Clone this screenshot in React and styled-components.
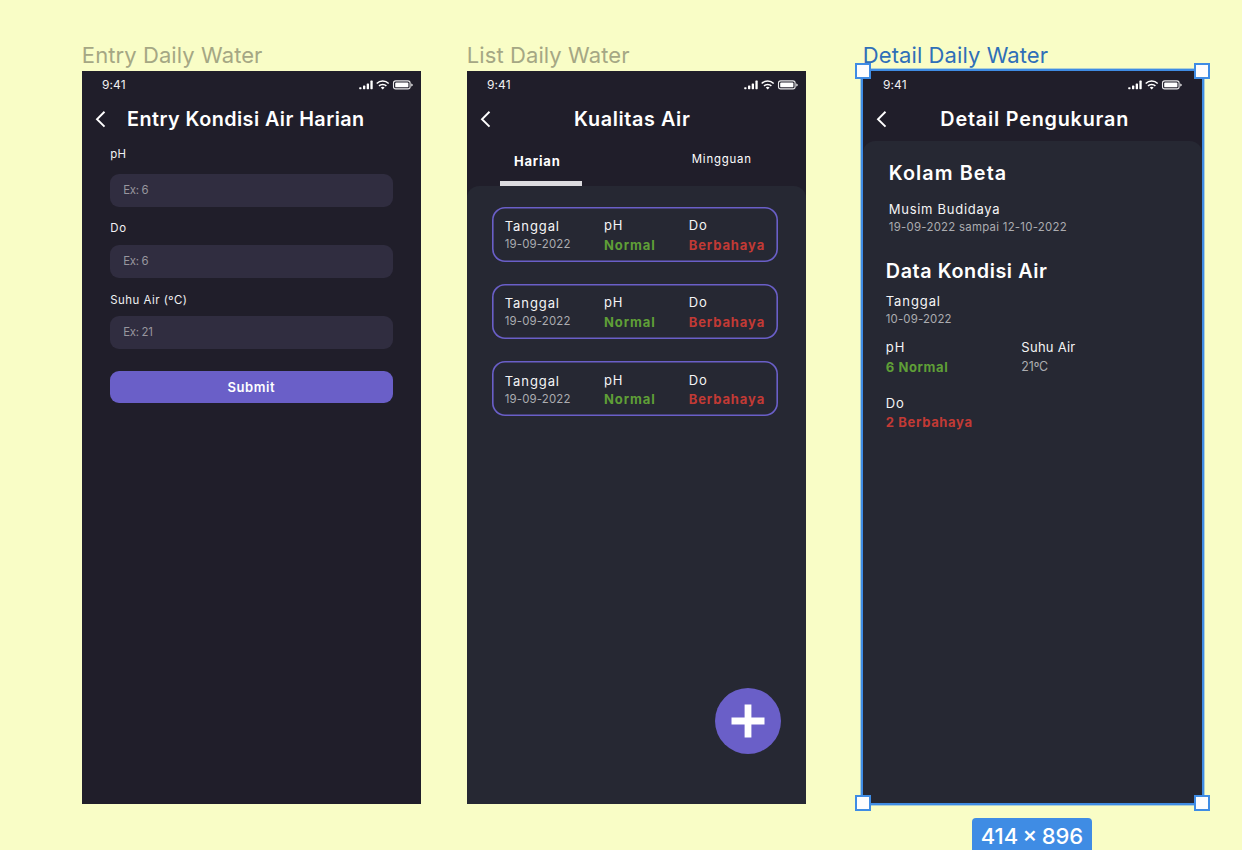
import React from 'react';
import styled, { createGlobalStyle } from 'styled-components';

const color = {
  canvas: '#f9fdc6',
  frame: '#201e2a',
  panel: '#262833',
  field: '#302d40',
  purple: '#6a5fc8',
  green: '#5f9f37',
  red: '#c23a35',
  blue: '#3f8ce4',
};

const GlobalStyle = createGlobalStyle`
  * { box-sizing: border-box; }
  body { margin: 0; background: ${color.canvas}; font-family: Inter, "Liberation Sans", sans-serif; overflow: hidden; }
`;

const Canvas = styled.main`
  display: flex;
  width: 1242px;
  height: 850px;
  padding: 39px 0 0 82px;
  overflow: hidden;
  background: ${color.canvas};
`;

const Artboard = styled.section`
  flex: none;
  width: 338.7px;
  margin-right: ${(p) => p.$gap || 0}px;
`;

const ArtboardName = styled.div`
  height: 32px;
  font-size: 22px;
  line-height: 32px;
  letter-spacing: 0.09px;
  text-indent: -0.2px;
  white-space: nowrap;
  color: ${(p) => (p.$selected ? '#2f6fb8' : '#a5a784')};
`;

const Screen = styled.div`
  position: relative;
  display: flex;
  flex-direction: column;
  height: 732.7px;
  background: ${color.frame};
`;

const StatusBar = styled.div`
  display: flex;
  flex: none;
  align-items: center;
  justify-content: space-between;
  height: 27px;
  padding: 0 ${(p) => p.$end}px 0 20px;
`;

const Clock = styled.span`
  font-size: 12px;
  letter-spacing: 0.1px;
  line-height: 16px;
  color: #f0f0f2;
`;

const Header = styled.header`
  display: flex;
  flex: none;
  align-items: center;
  height: 43px;
  padding: 0 0 2px 11.8px;
`;

const Title = styled.h1`
  margin: 0 0 0 ${(p) => p.$start}px;
  font-size: 19.8px;
  font-weight: 600;
  line-height: 28px;
  letter-spacing: ${(p) => p.$track}px;
  white-space: nowrap;
  color: #fff;
`;

const Form = styled.form`
  display: flex;
  flex-direction: column;
  padding: 4.5px 28px 0;
`;

const Label = styled.label`
  margin-bottom: ${(p) => p.$gap}px;
  font-size: 11.4px;
  line-height: 16px;
  letter-spacing: ${(p) => p.$track}px;
  text-indent: 0.3px;
  color: #f1f1f3;
`;

const Field = styled.div`
  height: 33.2px;
  margin-bottom: 13.5px;
  padding-left: 13.2px;
  border-radius: 9px;
  background: ${color.field};
  font-size: 11.4px;
  line-height: 33px;
  letter-spacing: -0.3px;
  color: #98969e;
`;

const Submit = styled.button`
  height: 32.6px;
  margin: 8px 0 0;
  padding: 0;
  border: 0;
  border-radius: 9px;
  background: ${color.purple};
  color: #fff;
  font: 600 13px/32px Inter, sans-serif;
  letter-spacing: 0.57px;
`;

const Tabs = styled.nav`
  display: flex;
  flex: none;
  height: 44.7px;
  padding-left: 33px;
`;

const Tab = styled.div`
  width: ${(p) => p.$width}px;
  margin-left: ${(p) => p.$start || 0}px;
  padding: ${(p) => (p.$active ? '11.5px 0 0 14px' : '10px 0 0 0.6px')};
  border-bottom: ${(p) => (p.$active ? '5px solid #dcdbdf' : '0')};
  font-size: ${(p) => (p.$active ? 13 : 11.4)}px;
  font-weight: ${(p) => (p.$active ? 700 : 400)};
  line-height: 16px;
  letter-spacing: 0.8px;
  color: #fff;
`;

const Panel = styled.div`
  flex: 1;
  padding: ${(p) => p.$pad};
  border-radius: 12px 12px 0 0;
  background: ${color.panel};
`;

const Card = styled.article`
  display: flex;
  width: 286px;
  height: 55px;
  margin-bottom: 22.2px;
  padding: 0 0 0 13px;
  border-radius: 13px;
  box-shadow: inset 0 0 0 1.6px ${color.purple};
`;

const Column = styled.div`
  width: ${(p) => p.$width}px;
  padding-top: ${(p) => p.$top || 0}px;
`;

const Name = styled.div`
  font-size: 13px;
  line-height: 18px;
  letter-spacing: ${(p) => p.$track ?? 0.9}px;
  white-space: nowrap;
  color: #f4f4f5;
`;

const Muted = styled.div`
  margin-top: ${(p) => p.$top || 0}px;
  font-size: ${(p) => p.$size || 11.4}px;
  line-height: 18px;
  letter-spacing: ${(p) => p.$track ?? 0.17}px;
  white-space: nowrap;
  color: #abacb0;
`;

const Status = styled.div`
  margin-top: 1.3px;
  font-size: 13px;
  font-weight: 700;
  line-height: 18px;
  letter-spacing: ${(p) => p.$track ?? 0.9}px;
  white-space: nowrap;
  color: ${(p) => (p.$danger ? color.red : color.green)};
`;

const AddButton = styled.button`
  position: absolute;
  right: 24.9px;
  bottom: 49.7px;
  display: grid;
  place-items: center;
  width: 66px;
  height: 66px;
  padding: 0;
  border: 0;
  border-radius: 50%;
  background: ${color.purple};
`;

const Heading = styled.h2`
  margin: 0 0 ${(p) => p.$gap}px ${(p) => p.$start || 0}px;
  font-size: 19.8px;
  font-weight: 600;
  line-height: 28px;
  letter-spacing: ${(p) => p.$track}px;
  color: #fff;
`;

const Season = styled.div`
  margin: 0 0 20.6px 3px;
`;

const Readings = styled.div`
  display: grid;
  grid-template-columns: 135.6px auto;
  row-gap: 18.3px;
  margin-top: 10.4px;
`;

const Selection = styled.div`
  position: absolute;
  inset: -2px -2px -1.6px -2px;
  border: 2px solid ${color.blue};
  box-shadow: 0 0 0 0.4px ${color.blue};
`;

const Handle = styled.i`
  position: absolute;
  width: 16px;
  height: 16px;
  border: 2px solid ${color.blue};
  background: #fdfdfe;
  ${(p) => p.$v}: -8px;
  ${(p) => p.$h}: -8px;
`;

const SizeBadge = styled.div`
  position: absolute;
  top: 747px;
  left: 109px;
  width: 120px;
  height: 36px;
  border-radius: 4px;
  background: ${color.blue};
  color: #fff;
  font-size: 22px;
  font-weight: 500;
  line-height: 36px;
  letter-spacing: -0.05px;
  word-spacing: -1.3px;
  font-feature-settings: "case";
  text-align: center;
  white-space: nowrap;
`;

const StatusIcons = () => (
  <svg width="54" height="10" viewBox="0 0 54 10" fill="#fff">
    <rect x=".2" y="7.2" width="2.3" height="2" rx=".6" />
    <rect x="4" y="5.6" width="2.3" height="3.6" rx=".6" />
    <rect x="7.7" y="3.4" width="2.3" height="5.8" rx=".6" />
    <rect x="11.4" y="0.6" width="2.3" height="8.6" rx=".6" />
    <g fill="none" stroke="#fff" strokeWidth="1.5">
      <path d="M17.7 3.5a8.6 8.6 0 0 1 12 0" />
      <path d="M20 5.9a5.3 5.3 0 0 1 7.4 0" />
    </g>
    <path d="M21.8 7.6a2.8 2.8 0 0 1 3.8 0L23.7 9.5z" />
    <rect x="34.5" y=".9" width="16.6" height="8" rx="2.2" fill="none" stroke="#fff" strokeOpacity=".9" strokeWidth="1.1" />
    <rect x="36.2" y="2.5" width="13.2" height="4.8" rx=".9" />
    <path d="M52.3 3.4c1 .3 1.4.9 1.4 1.5s-.4 1.2-1.4 1.5z" />
  </svg>
);

const BackIcon = () => (
  <svg width="13" height="18" viewBox="0 0 13 18" fill="none" stroke="#fff" strokeWidth="1.9">
    <path d="M10.5 1.8 3 9.2l7.5 7.4" />
  </svg>
);

const Top = ({ title, start, track, end = 7.5 }) => (
  <>
    <StatusBar $end={end}>
      <Clock>9:41</Clock>
      <StatusIcons />
    </StatusBar>
    <Header>
      <BackIcon />
      <Title $start={start} $track={track}>{title}</Title>
    </Header>
  </>
);

const EntryScreen = () => (
  <Screen>
    <Top title="Entry Kondisi Air Harian" start={20.3} track={0.44} />
    <Form>
      <Label $gap={12.3} $track={0.32}>pH</Label>
      <Field>Ex: 6</Field>
      <Label $gap={8.5} $track={0.8}>Do</Label>
      <Field>Ex: 6</Field>
      <Label $gap={8.5} $track={0.5}>Suhu Air (ºC)</Label>
      <Field>Ex: 21</Field>
      <Submit type="button">Submit</Submit>
    </Form>
  </Screen>
);

const ListScreen = () => (
  <Screen>
    <Top title="Kualitas Air" start={82.3} track={0.62} />
    <Tabs>
      <Tab $active $width={81.7}>Harian</Tab>
      <Tab $start={109.5} $width={70}>Mingguan</Tab>
    </Tabs>
    <Panel $pad="21.3px 0 0 24.8px">
      {[0, 1, 2].map((i) => (
        <Card key={i}>
          <Column $width={99.2} $top={10.3}>
            <Name>Tanggal</Name>
            <Muted>19-09-2022</Muted>
          </Column>
          <Column $width={84.7} $top={9.3}>
            <Name>pH</Name>
            <Status>Normal</Status>
          </Column>
          <Column $width={80} $top={9.3}>
            <Name>Do</Name>
            <Status $danger>Berbahaya</Status>
          </Column>
        </Card>
      ))}
    </Panel>
    <AddButton aria-label="Tambah">
      <svg width="34" height="34" viewBox="0 0 34 34" stroke="#fff" strokeWidth="6.8">
        <path d="M17 .5v33M.5 17h33" />
      </svg>
    </AddButton>
  </Screen>
);

const DetailScreen = () => (
  <Screen>
    <Top title="Detail Pengukuran" start={52.6} track={0.8} end={19.7} />
    <Panel $pad="18px 0 0 22.8px">
      <Heading $gap={13.4} $start={3} $track={1.08}>Kolam Beta</Heading>
      <Season>
        <Name $track={0.72}>Musim Budidaya</Name>
        <Muted $track={0.27}>19-09-2022 sampai 12-10-2022</Muted>
      </Season>
      <Heading $gap={7} $track={0.58}>Data Kondisi Air</Heading>
      <Name>Tanggal</Name>
      <Muted>10-09-2022</Muted>
      <Readings>
        <div>
          <Name>pH</Name>
          <Status $track={0.61}>6 Normal</Status>
        </div>
        <div>
          <Name $track={0.25}>Suhu Air</Name>
          <Muted $size={12.4} $track={-0.15} $top={1.3}>21ºC</Muted>
        </div>
        <div>
          <Name>Do</Name>
          <Status $danger $track={0.66}>2 Berbahaya</Status>
        </div>
      </Readings>
    </Panel>
    <Selection>
      <Handle $v="top" $h="left" />
      <Handle $v="top" $h="right" />
      <Handle $v="bottom" $h="left" />
      <Handle $v="bottom" $h="right" />
    </Selection>
    <SizeBadge>414 × 896</SizeBadge>
  </Screen>
);

export default function App() {
  return (
    <>
      <GlobalStyle />
      <Canvas>
        <Artboard $gap={46.3}>
          <ArtboardName>Entry Daily Water</ArtboardName>
          <EntryScreen />
        </Artboard>
        <Artboard $gap={57.3}>
          <ArtboardName>List Daily Water</ArtboardName>
          <ListScreen />
        </Artboard>
        <Artboard>
          <ArtboardName $selected>Detail Daily Water</ArtboardName>
          <DetailScreen />
        </Artboard>
      </Canvas>
    </>
  );
}
